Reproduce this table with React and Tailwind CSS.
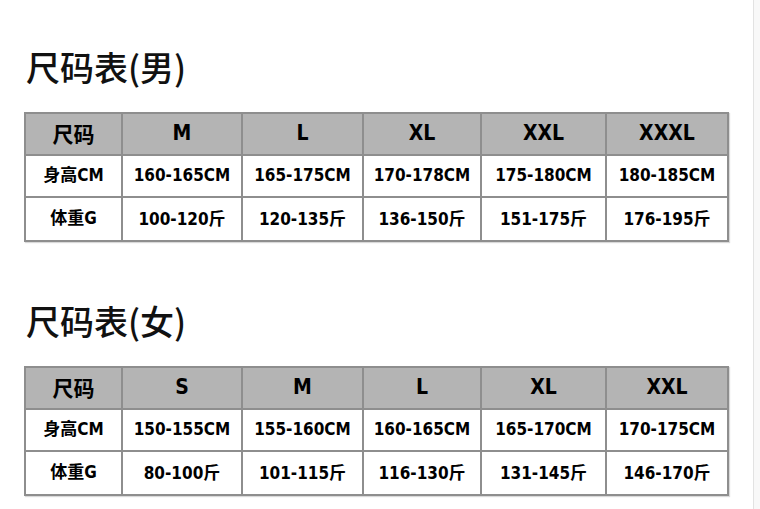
const cols = ['w-[97px]', 'w-[120px]', 'w-[121px]', 'w-[118px]', 'w-[125px]', 'w-[122px]'];

const charts = [
  {
    title: '尺码表(男)',
    sizes: ['M', 'L', 'XL', 'XXL', 'XXXL'],
    height: ['160-165CM', '165-175CM', '170-178CM', '175-180CM', '180-185CM'],
    weight: ['100-120斤', '120-135斤', '136-150斤', '151-175斤', '176-195斤'],
  },
  {
    title: '尺码表(女)',
    sizes: ['S', 'M', 'L', 'XL', 'XXL'],
    height: ['150-155CM', '155-160CM', '160-165CM', '165-170CM', '170-175CM'],
    weight: ['80-100斤', '101-115斤', '116-130斤', '131-145斤', '146-170斤'],
  },
];

const cellFont = {
  fontFamily: '"DejaVu Sans Condensed", "Liberation Sans Narrow", "Noto Sans CJK SC", sans-serif',
};

function SizeTable({ chart }) {
  return (
    <table className="border-collapse border-2 border-[#8e8e8e] shadow-[1px_1px_1px_rgba(0,0,0,0.15)] text-black" style={cellFont}>
      <tbody>
        <tr className="h-[42px] bg-[#b4b4b4]">
          <td className={`${cols[0]} border-2 border-[#8e8e8e] text-center font-bold`}>
            <span className="text-[21px]" style={{ fontFamily: '"Noto Sans CJK SC", sans-serif' }}>尺码</span>
          </td>
          {chart.sizes.map((s, i) => (
            <td key={s} className={`${cols[i + 1]} border-2 border-[#8e8e8e] text-center text-[21px] font-bold`}>{s}</td>
          ))}
        </tr>
        <tr className="h-[42px] bg-white">
          <td className="border-2 border-[#8e8e8e] text-center text-[17px] font-bold">身高CM</td>
          {chart.height.map(v => (
            <td key={v} className="border-2 border-[#8e8e8e] text-center text-[17px] font-bold">{v}</td>
          ))}
        </tr>
        <tr className="h-[44px] bg-white">
          <td className="border-2 border-[#8e8e8e] text-center text-[17px] font-bold">体重G</td>
          {chart.weight.map(v => (
            <td key={v} className="border-2 border-[#8e8e8e] text-center text-[17px] font-bold pt-[2px]">{v}</td>
          ))}
        </tr>
      </tbody>
    </table>
  );
}

export default function App() {
  return (
    <div className="flex w-[760px] h-[509px] bg-white overflow-hidden">
      <div className="flex-1 pl-[24px]">
        {charts.map((chart, i) => (
          <section key={chart.title} className={i === 0 ? 'pt-[46px]' : 'pt-[58px]'}>
            <h2
              className="pl-[2px] text-[34px] leading-[42px] font-medium text-[#111]"
              style={{ fontFamily: '"Noto Sans CJK SC", "Noto Sans CJK JP", serif' }}
            >
              {chart.title}
            </h2>
            <div className="mt-[24px]">
              <SizeTable chart={chart} />
            </div>
          </section>
        ))}
      </div>
      <div className="w-[7px] border-l border-[#e2e2e2] bg-[#f8f8f8]" />
    </div>
  );
}
